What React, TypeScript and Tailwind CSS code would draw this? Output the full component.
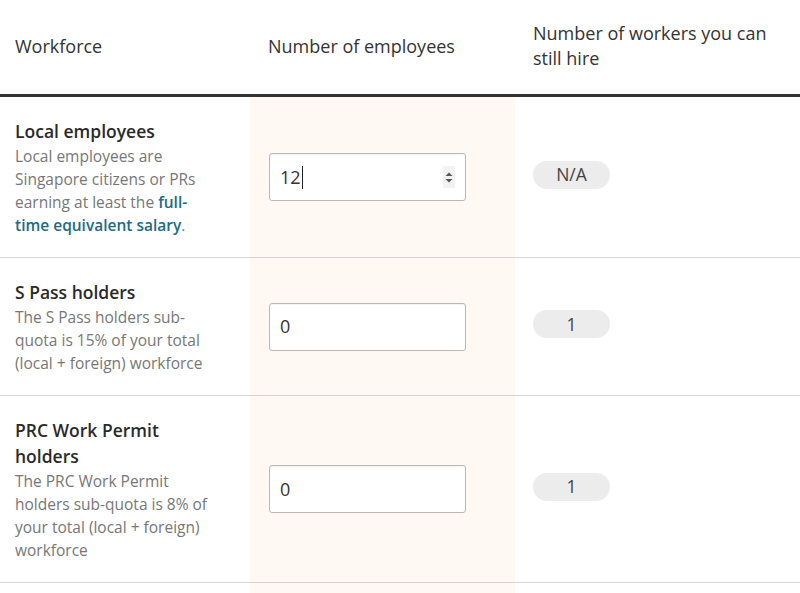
import { ReactNode } from 'react'

type Row = {
  title: ReactNode
  desc: ReactNode
  value: string
  quota: string
  focused?: boolean
}

const rows: Row[] = [
  {
    title: 'Local employees',
    desc: (
      <>
        Local employees are Singapore citizens or PRs earning at least the{' '}
        <a href="#" className="font-semibold text-[#1d6b82]">full-time equivalent salary</a>.
      </>
    ),
    value: '12',
    quota: 'N/A',
    focused: true,
  },
  {
    title: 'S Pass holders',
    desc: 'The S Pass holders sub-quota is 15% of your total (local + foreign) workforce',
    value: '0',
    quota: '1',
  },
  {
    title: 'PRC Work Permit holders',
    desc: 'The PRC Work Permit holders sub-quota is 8% of your total (local + foreign) workforce',
    value: '0',
    quota: '1',
  },
]

function NumberBox({ value, focused }: { value: string; focused?: boolean }) {
  return (
    <div className="flex h-[48px] w-[197px] items-center rounded-[3px] border border-[#b9b9b9] bg-white pl-[10px] pr-[10px] text-[18px] text-[#333] shadow-[inset_0_1px_1px_rgba(0,0,0,0.05)]">
      <span>{value}</span>
      {focused && <span className="ml-[1px] h-[23px] w-px bg-[#222]" />}
      {focused && (
        <span className="ml-auto flex h-[22px] w-[12px] items-center justify-center bg-[#f2f2f2]">
          <svg width="8" height="13" viewBox="0 0 8 13">
            <path d="M4 1.5 L7.5 5 H0.5 Z" fill="#555" />
            <path d="M4 11.5 L7.5 8 H0.5 Z" fill="#555" />
          </svg>
        </span>
      )}
    </div>
  )
}

export default function App() {
  return (
    <div className="min-h-[593px] w-[800px] bg-white font-['Open_Sans',sans-serif]">
      <div className="grid h-[97px] grid-cols-[250px_265px_1fr] border-b-[3px] border-[#333] pb-[2px] text-[18px] leading-[25px] text-[#333]">
        <div className="flex items-center pl-[15px]">Workforce</div>
        <div className="flex items-center pl-[18px]">Number of employees</div>
        <div className="flex items-center pl-[18px] pr-[20px]">Number of workers you can still hire</div>
      </div>

      {rows.map((row, i) => (
        <div key={i} className="grid grid-cols-[250px_265px_1fr] border-b border-[#d4d4d4]">
          <div className="pb-[20px] pl-[15px] pr-[37px] pt-[21px]">
            <div className="text-[17.5px] font-semibold leading-[26px] text-[#2a2a2a]">{row.title}</div>
            <p className="mt-px text-[15.5px] leading-[23px] text-[#777]">{row.desc}</p>
          </div>
          <div className="flex items-center bg-[#fff8f3] pl-[19px]">
            <NumberBox value={row.value} focused={row.focused} />
          </div>
          <div className="flex items-center pl-[18px]">
            <span className="mb-[5px] flex h-[28px] w-[77px] items-center justify-center rounded-full bg-[#ececec] text-[17.5px] text-[#444]">
              {row.quota}
            </span>
          </div>
        </div>
      ))}

      <div className="grid h-[20px] grid-cols-[250px_265px_1fr]">
        <div />
        <div className="bg-[#fff8f3]" />
        <div />
      </div>
    </div>
  )
}
